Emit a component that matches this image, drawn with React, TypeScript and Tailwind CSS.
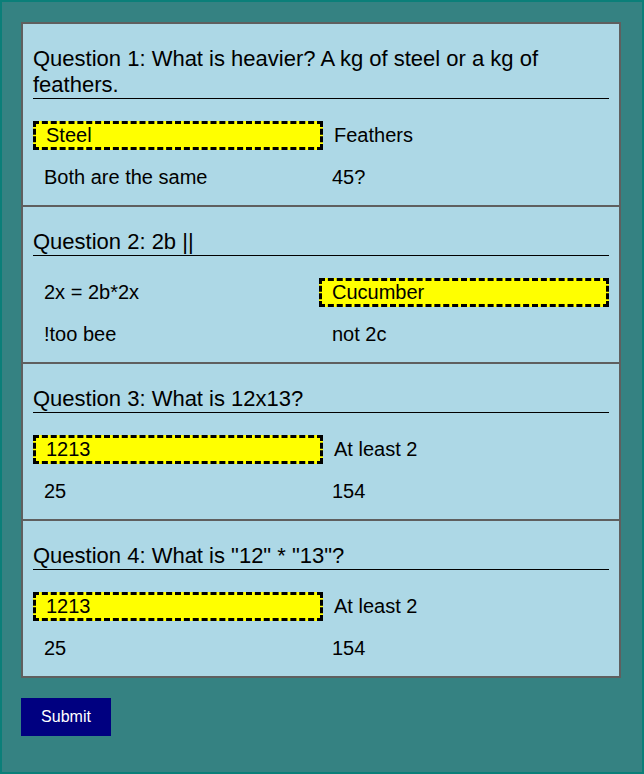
const questions = [
  {
    title: "Question 1: What is heavier? A kg of steel or a kg of feathers.",
    options: ["Steel", "Feathers", "Both are the same", "45?"],
    selected: 0,
  },
  {
    title: "Question 2: 2b ||",
    options: ["2x = 2b*2x", "Cucumber", "!too bee", "not 2c"],
    selected: 1,
  },
  {
    title: "Question 3: What is 12x13?",
    options: ["1213", "At least 2", "25", "154"],
    selected: 0,
  },
  {
    title: 'Question 4: What is "12" * "13"?',
    options: ["1213", "At least 2", "25", "154"],
    selected: 0,
  },
];

function Option({ text, selected, col, pushed }: { text: string; selected: boolean; col: number; pushed: boolean }) {
  if (selected) {
    return (
      <div
        className={
          "h-[29px] flex items-center pb-[2px] px-[10px] border-[3px] border-dashed border-black bg-[#ffff00] " +
          (col === 0 ? "-mr-[2px]" : "-ml-[2px]")
        }
      >
        {text}
      </div>
    );
  }
  return (
    <div className={"h-[29px] flex items-center pb-[2px] " + (pushed ? "pl-[13px]" : "pl-[11px]")}>{text}</div>
  );
}

export default function App() {
  return (
    <div className="min-h-[774px] bg-[#358282] border-2 border-[#0b7f79] px-[19px] pt-[20px] font-['Liberation_Sans',Arial,sans-serif] text-black">
      <div className="w-[600px] border-2 border-[#5f5f5f] bg-[#add8e6] divide-y-2 divide-[#5f5f5f]">
        {questions.map((q) => (
          <div key={q.title} className="px-[10px] pt-[22px] pb-[13px]">
            <h2 className="text-[22px] leading-[26px] border-b border-black">{q.title}</h2>
            <div className="grid grid-cols-2 gap-y-[13px] mt-[22px] text-[20px]">
              {q.options.map((o, i) => (
                <Option
                  key={i}
                  text={o}
                  selected={i === q.selected}
                  col={i % 2}
                  pushed={i % 2 === 1 && q.selected === i - 1}
                />
              ))}
            </div>
          </div>
        ))}
      </div>
      <button className="mt-[20px] w-[90px] h-[38px] bg-[#000080] text-white text-[16px]">Submit</button>
    </div>
  );
}
